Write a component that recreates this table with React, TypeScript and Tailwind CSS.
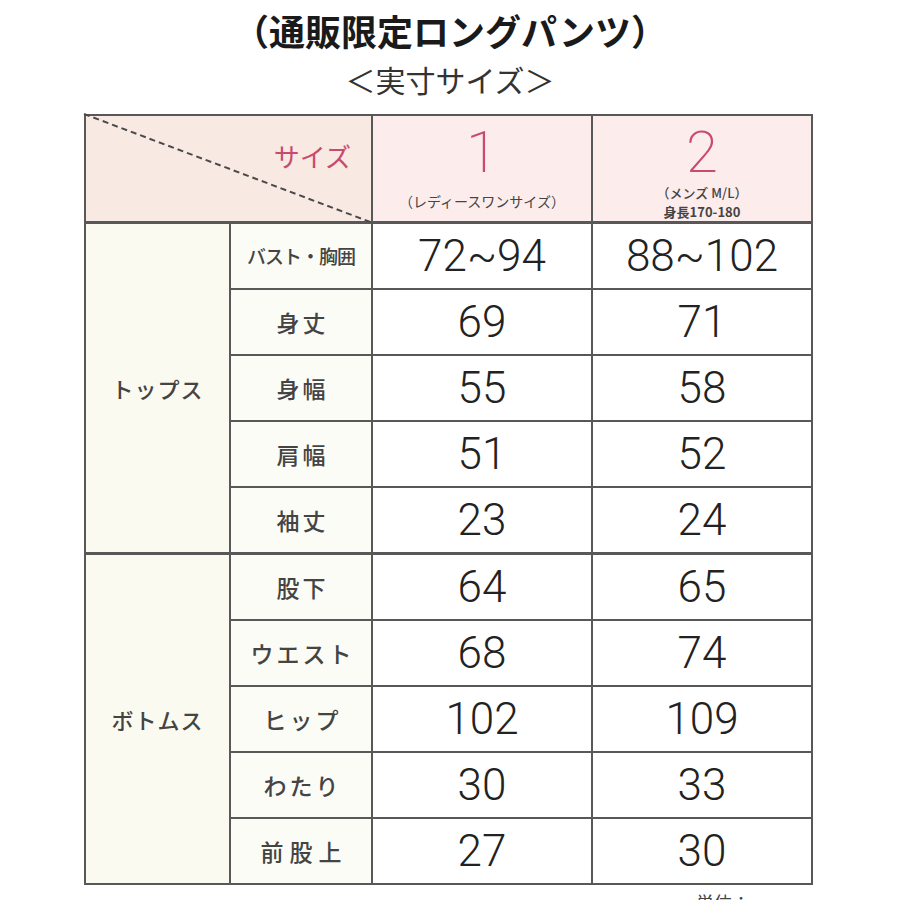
import React from 'react';

type Row = { label: string; a: string; b: string; small?: boolean; wide?: boolean };

const tops: Row[] = [
  { label: 'バスト・胸囲', a: '72~94', b: '88~102', small: true },
  { label: '身丈', a: '69', b: '71' },
  { label: '身幅', a: '55', b: '58' },
  { label: '肩幅', a: '51', b: '52' },
  { label: '袖丈', a: '23', b: '24' },
];

const bottoms: Row[] = [
  { label: '股下', a: '64', b: '65' },
  { label: 'ウエスト', a: '68', b: '74' },
  { label: 'ヒップ', a: '102', b: '109' },
  { label: 'わたり', a: '30', b: '33' },
  { label: '前股上', a: '27', b: '30', wide: true },
];

const numCls =
  "bg-white flex items-center justify-center text-[44px] font-light text-[#222] leading-none font-[family-name:Roboto,'Noto_Sans',sans-serif]";

const Section = ({ title, rows }: { title: string; rows: Row[] }) => (
  <div className="grid grid-cols-[143px_140px_218px_218px] grid-rows-[repeat(5,64px)] gap-[2px]">
    <div className="row-span-5 bg-[#fafaf0] flex items-center justify-center text-[22px] font-medium text-[#444] tracking-[1px]">
      {title}
    </div>
    {rows.map((r) => (
      <React.Fragment key={r.label}>
        <div
          className={`bg-[#fcfcf6] flex items-center justify-center font-medium text-[#444] ${
            r.small ? 'text-[19px] tracking-[-1px]' : r.wide ? 'text-[23px] tracking-[6px] pl-[6px]' : 'text-[23px] tracking-[3px] pl-[3px]'
          }`}
        >
          {r.label}
        </div>
        <div className={numCls}>{r.a}</div>
        <div className={numCls}>{r.b}</div>
      </React.Fragment>
    ))}
  </div>
);

export default function App() {
  return (
    <div className="w-[900px] h-[900px] overflow-hidden bg-white font-[family-name:'Noto_Sans_CJK_JP','Noto_Sans',sans-serif]">
      <div className="h-[114px] flex flex-col items-center">
        <div className="mt-[4px] text-[36px] font-bold leading-[53px] text-[#1a1a1a]">（通販限定ロングパンツ）</div>
        <div className="text-[30px] leading-[44px] text-[#333]">＜実寸サイズ＞</div>
      </div>

      <div className="ml-[84px] w-[729px] bg-[#585858] p-[2px] flex flex-col gap-[3px]">
        <div className="grid grid-cols-[285px_218px_218px] gap-[2px] h-[105px]">
          <div className="relative bg-[#f8e9e2]">
            <svg className="absolute left-[-2px] top-[-2px] overflow-visible" width="289" height="109">
              <line x1="0" y1="0" x2="289" y2="109" stroke="#4a4a4a" strokeWidth="2" strokeDasharray="6 4" />
            </svg>
            <div className="absolute right-[20px] top-[20px] text-[26px] text-[#c94a6e]">サイズ</div>
          </div>
          <div className="bg-[#fcecec] flex flex-col items-center">
            <div className="mt-[5px] text-[58px] font-extralight leading-[62px] text-[#c94a6e] font-[family-name:Roboto,sans-serif]">1</div>
            <div className="mt-[8px] text-[14px] leading-[20px] text-[#444]">（レディースワンサイズ）</div>
          </div>
          <div className="bg-[#fcecec] flex flex-col items-center">
            <div className="mt-[5px] text-[58px] font-extralight leading-[62px] text-[#c94a6e] font-[family-name:Roboto,sans-serif]">2</div>
            <div className="text-[13px] leading-[19px] text-[#444] font-medium">（メンズ M/L）</div>
            <div className="text-[13px] leading-[19px] text-[#444] font-bold">身長170-180</div>
          </div>
        </div>
        <Section title="トップス" rows={tops} />
        <Section title="ボトムス" rows={bottoms} />
      </div>

      <div className="ml-[696px] mt-[5px] text-[18px] leading-[24px] text-[#444]">単位：cm</div>
    </div>
  );
}
